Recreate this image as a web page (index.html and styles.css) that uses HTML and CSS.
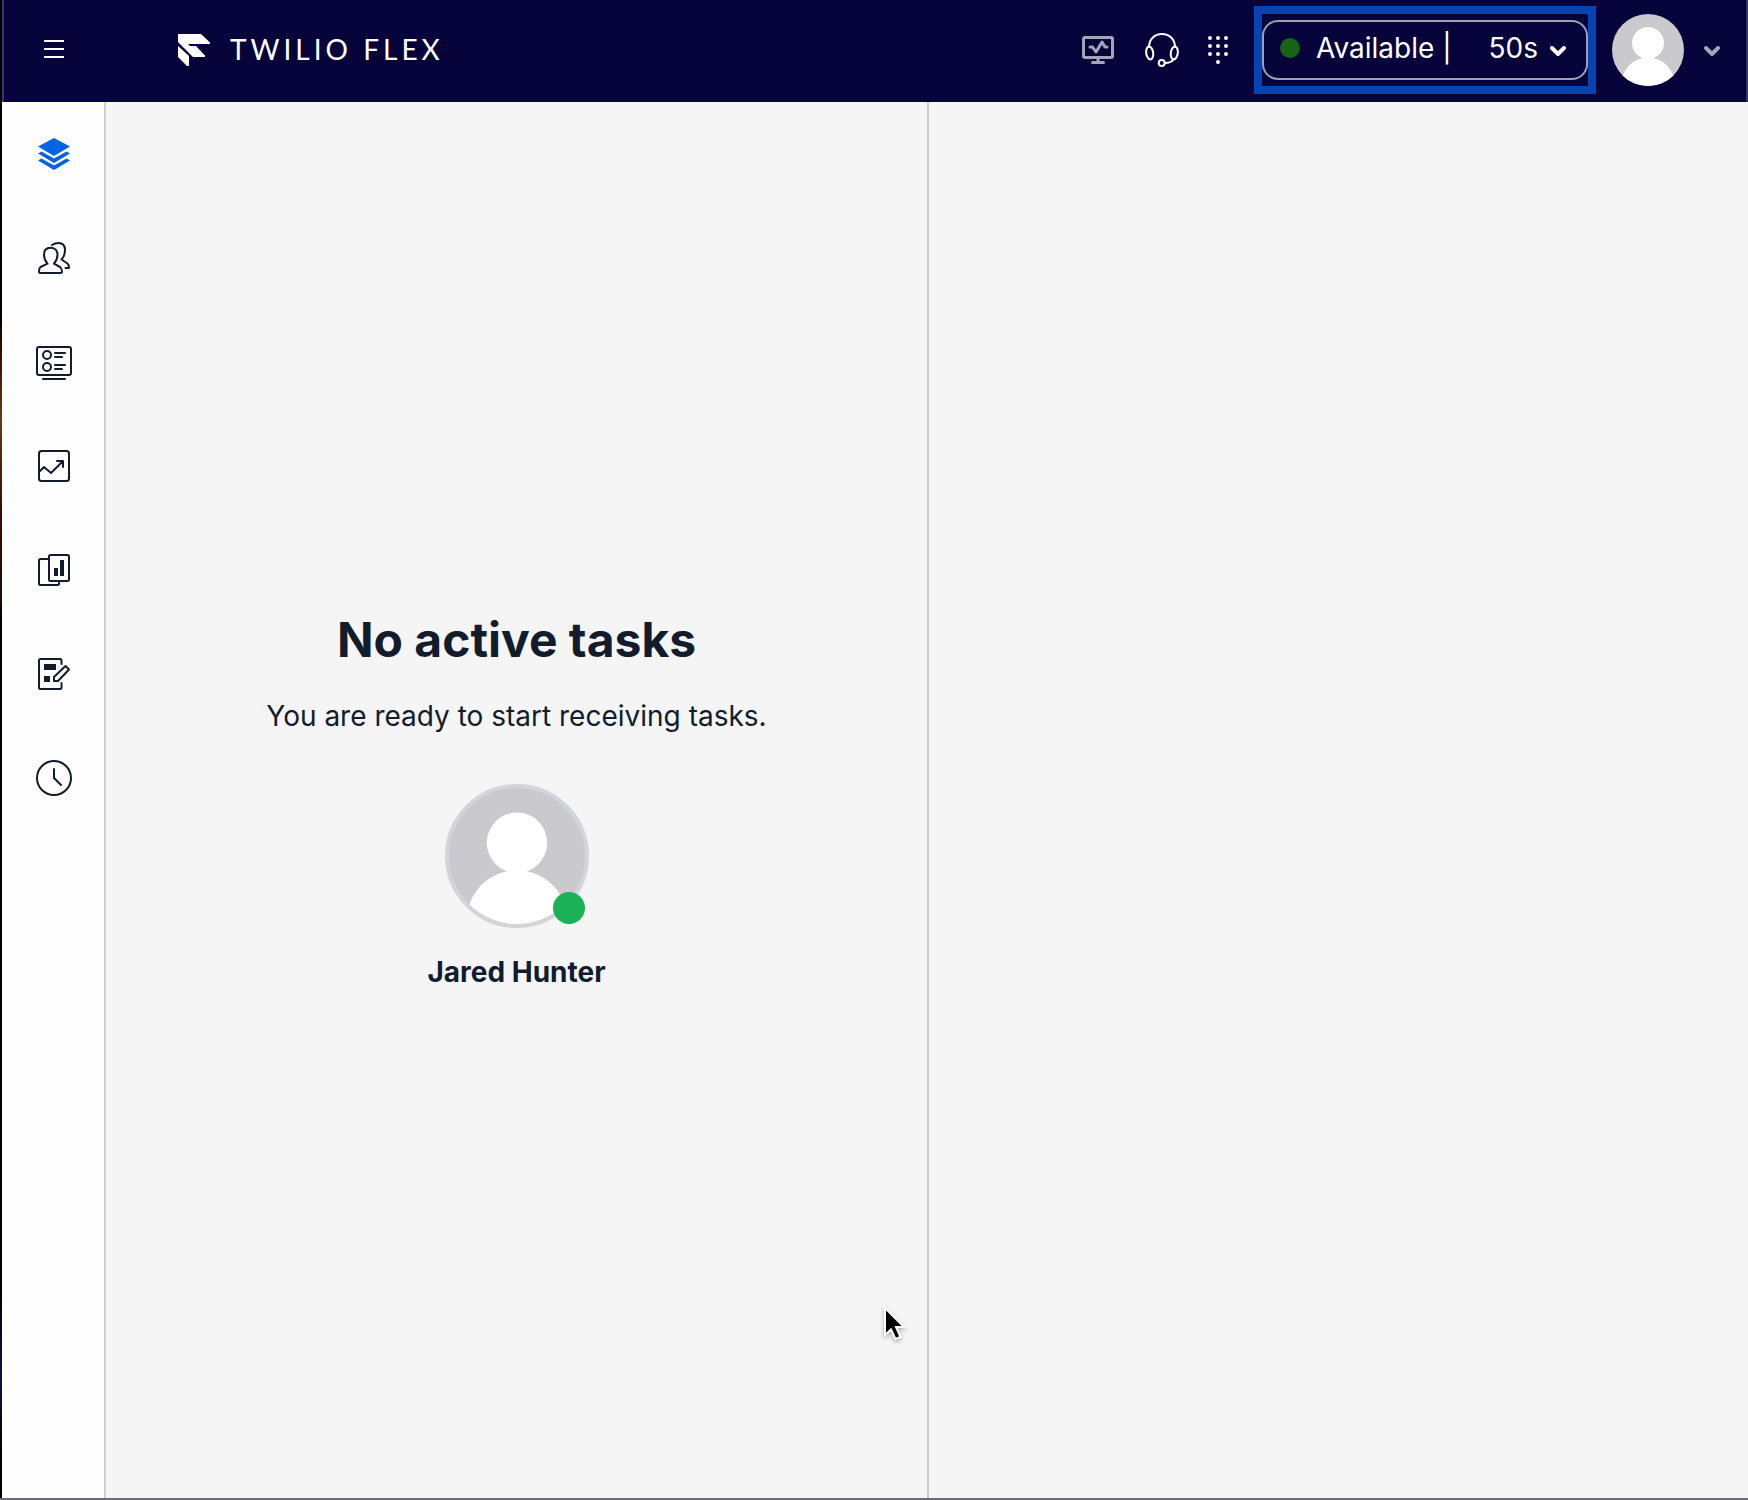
FILE: index.html
```html
<!DOCTYPE html>
<html lang="en">
<head>
<meta charset="utf-8">
<meta name="viewport" content="width=device-width, initial-scale=1">
<title>Twilio Flex</title>
<link rel="stylesheet" href="styles.css">
</head>
<body>
<svg class="defs" aria-hidden="true">
  <symbol id="person" viewBox="0 0 72 72">
    <circle cx="36" cy="29" r="16"/>
    <circle cx="36" cy="70" r="26.500"/>
  </symbol>
  <symbol id="chevron" viewBox="0 0 16 12">
    <path d="M2 3l6 6 6-6" fill="none" stroke="currentColor" stroke-width="4" stroke-linecap="round" stroke-linejoin="round"/>
  </symbol>
</svg>
<div class="window">
  <header class="topbar">
    <button class="menu" type="button" aria-label="Menu">
      <svg width="20" height="18" viewBox="0 0 20 18"><path d="M0 1h20M0 9h20M0 17h20" stroke="currentColor" stroke-width="2"/></svg>
    </button>
    <a class="brand" href="#">
      <svg width="32" height="32" viewBox="0 0 32 32" fill="currentColor">
        <path d="M0 0h23l9 8.500V10H10l2 2h6l9 9.500V23H15L0 8z"/>
        <path d="M0 12l11 10v10H9L0 23z"/>
      </svg>
      <span class="wordmark">TWILIO FLEX</span>
    </a>
    <div class="tools">
      <button class="tool dim" type="button" aria-label="Monitor">
        <svg width="36" height="36" viewBox="0 0 36 36" fill="none" stroke="currentColor" stroke-width="3" stroke-linejoin="round" stroke-linecap="round"><rect x="3.500" y="5.500" width="29" height="20" rx="1.500"/><path d="M10 15h2.500l3.500 5 6-10 3 5h2M18 26v4M12.500 30.500h11"/></svg>
      </button>
      <button class="tool" type="button" aria-label="Audio devices">
        <svg width="36" height="36" viewBox="0 0 36 36" fill="none" stroke="currentColor" stroke-width="2" stroke-linecap="round"><path d="M5 15C5 7 11 2 18 2s13 5 13 13M21 31c4 0 7-1 9-4"/><ellipse cx="5.700" cy="21" rx="3.500" ry="6.500" transform="rotate(-8 5.700 21)"/><ellipse cx="30.300" cy="21" rx="3.500" ry="6.500" transform="rotate(8 30.300 21)"/><circle cx="17.700" cy="31" r="3"/></svg>
      </button>
      <button class="tool" type="button" aria-label="Dialpad">
        <svg width="20" height="28" viewBox="0 0 20 28" fill="currentColor"><circle cx="2" cy="2" r="2"/><circle cx="10" cy="2" r="2"/><circle cx="18" cy="2" r="2"/><circle cx="2" cy="10" r="2"/><circle cx="10" cy="10" r="2"/><circle cx="18" cy="10" r="2"/><circle cx="2" cy="18" r="2"/><circle cx="10" cy="18" r="2"/><circle cx="18" cy="18" r="2"/><circle cx="10" cy="26" r="2"/></svg>
      </button>
    </div>
    <div class="highlight">
      <button class="status" type="button">
        <span class="status-dot"></span>
        <span>Available |</span>
        <span class="timer">50s</span>
        <svg class="chevron" width="16" height="12"><use href="#chevron"/></svg>
      </button>
    </div>
    <button class="account" type="button" aria-label="Account">
      <svg class="avatar small" viewBox="0 0 72 72"><use href="#person"/></svg>
      <svg class="chevron dim" width="16" height="12"><use href="#chevron"/></svg>
    </button>
  </header>
  <div class="workspace">
    <nav class="sidebar" aria-label="Main">
      <a class="nav-item active" href="#" aria-label="Agent desktop">
        <svg class="icon" viewBox="0 0 36 36"><g fill="currentColor" stroke="none"><path d="M18 2l16 8.500L18 20 2 10.500z"/><path d="M2 17.500L5.500 15.500 18 22.500 30.500 15.500 34 17.500 18 27z"/><path d="M2 24.500L5.500 22.500 18 29.500 30.500 22.500 34 24.500 18 34z"/></g></svg>
      </a>
      <a class="nav-item" href="#" aria-label="Teams">
        <svg class="icon" viewBox="0 0 36 36"><path d="M14.500 7.700c-4.500 0-6.500 3-6.500 7 0 4 1 6 3.500 9L4.500 27c-1.500 1-1.500 2.500-1.500 4.500q0 1.500 1.500 1.500h20q1.500 0 1.500-1.500c0-2-.5-3.500-2-4.500l-6-3.300c2.500-3 3.500-5 3.500-9 0-4-2.500-7-7-7zM16 5c2-1.300 4-2 6.500-2 5 0 6.500 3 6.500 7 0 4-1 7-3.500 9.500l6 4c1.200 1 1.500 2 1.500 4.500h-3.500"/></svg>
      </a>
      <a class="nav-item" href="#" aria-label="Queue statistics">
        <svg class="icon" viewBox="0 0 36 36"><rect x="1" y="3" width="34" height="28" rx="2"/><circle cx="11" cy="11" r="4"/><circle cx="11" cy="23" r="4"/><path d="M19 9h10M19 13h7M19 21h10M19 25h7M7 35h22"/></svg>
      </a>
      <a class="nav-item" href="#" aria-label="Insights">
        <svg class="icon" viewBox="0 0 36 36"><rect x="3" y="3" width="30" height="30" rx="2.500"/><path d="M4 23l4-4 7 6 12-12M21 13h6v6"/></svg>
      </a>
      <a class="nav-item" href="#" aria-label="Dashboards">
        <svg class="icon" viewBox="0 0 36 36"><rect x="13" y="3" width="20" height="26" rx="1.500"/><path d="M13 7H4.500Q3 7 3 8.500v23Q3 33 4.500 33h17q1.500 0 1.500-1.500V29"/><path d="M18 16h4v8h-4zM24 8h4v16h-4z" fill="currentColor" stroke="none"/></svg>
      </a>
      <a class="nav-item" href="#" aria-label="Questionnaires">
        <svg class="icon" viewBox="0 0 36 36"><path d="M25.500 8V4.500Q25.500 3 24 3H4.500Q3 3 3 4.500v27Q3 33 4.500 33H24q1.500 0 1.500-1.500V27"/><path d="M18 25v-4L29.500 10l3.500 3.500L22 25z"/><path d="M8 8h12v6H8zM8 20h6v6H8z" fill="currentColor" stroke="none"/></svg>
      </a>
      <a class="nav-item" href="#" aria-label="Historical">
        <svg class="icon" viewBox="0 0 36 36"><circle cx="18" cy="18" r="17"/><path d="M18 9v9l7 7"/></svg>
      </a>
    </nav>
    <main class="panels">
      <section class="tasks">
        <h1>No active tasks</h1>
        <p class="hint">You are ready to start receiving tasks.</p>
        <div class="profile">
          <svg class="avatar large" viewBox="0 0 72 72"><use href="#person"/></svg>
          <span class="presence"></span>
        </div>
        <p class="name">Jared Hunter</p>
      </section>
      <section class="canvas"></section>
    </main>
  </div>
  <svg class="cursor" width="28" height="40" viewBox="0 0 28 40"><path d="M3 2v27l6-5.500 4.500 9.500 5-2-4.500-10h8z" fill="#000" stroke="#fff" stroke-width="2"/></svg>
</div>
</body>
</html>
```
FILE: styles.css
```css
* {
  box-sizing: border-box;
}

body {
  margin: 0;
  font-family: Inter, "Liberation Sans", sans-serif;
  font-size: 28px;
  line-height: 40px;
  color: #121c2d;
}

button {
  display: flex;
  align-items: center;
  padding: 0;
  border: 0;
  background: none;
  color: inherit;
  font: inherit;
  cursor: pointer;
}

h1,
p {
  margin: 0;
}

svg {
  display: block;
  flex: none;
}

.defs {
  position: absolute;
  width: 0;
  height: 0;
}

.window {
  position: relative;
  display: flex;
  flex-direction: column;
  min-height: 100vh;
  padding-left: 2px;
  border-bottom: 2px solid #6e6b76;
  background: linear-gradient(#000 0 21%, #3a1408 24%, #6b3a10 28%, #3a0a08 34%, #1c0c08 40%, #000 41% 68%, #000 86%, #10123c 92%, #000 97%);
}

.topbar {
  display: flex;
  align-items: center;
  height: 102px;
  padding: 0 28px 2px 0;
  background: #06033a;
  box-shadow: inset 2px 0 #37346a, inset -2px 0 #37346a;
  color: #fff;
}

.menu {
  justify-content: center;
  width: 104px;
  height: 100px;
  padding-bottom: 2px;
}

.brand {
  display: flex;
  align-items: center;
  gap: 20px;
  margin-left: 72px;
  color: inherit;
  text-decoration: none;
}

.wordmark {
  padding-bottom: 2px;
  font-family: Lato, sans-serif;
  font-weight: 400;
  letter-spacing: 4px;
}

.tools {
  display: flex;
  align-items: center;
  gap: 28px;
  margin-left: auto;
}

.dim {
  color: #a5a4b8;
}

.highlight {
  margin-left: 26px;
  padding: 6px 0;
  border: 8px solid #0645b1;
}

.status {
  width: 326px;
  height: 60px;
  padding: 0 20px 4px 16px;
  border: 2px solid #a09fb2;
  border-radius: 16px;
}

.status-dot {
  width: 20px;
  height: 20px;
  margin-right: 16px;
  border-radius: 50%;
  background: #186416;
}

.timer {
  margin-left: auto;
  margin-right: 12px;
}

.status .chevron {
  margin-top: 6px;
}

.account {
  gap: 20px;
  margin-left: 16px;
}

.account .chevron {
  margin-top: 2px;
}

.avatar {
  border-radius: 50%;
  background: #c9c9ce;
  fill: #fff;
}

.avatar.small {
  width: 72px;
  height: 72px;
}

.avatar.large {
  width: 144px;
  height: 144px;
  border: 4px solid #d4d4dc;
}

.workspace {
  display: flex;
  flex: 1;
}

.sidebar {
  flex: none;
  width: 104px;
  background: #fefefe;
  box-shadow: inset -2px 0 #d0d0d5;
}

.nav-item {
  display: flex;
  align-items: center;
  justify-content: center;
  height: 104px;
  color: #121c2d;
}

.nav-item.active {
  color: #0263e0;
}

.icon {
  width: 36px;
  height: 36px;
  fill: none;
  stroke: currentColor;
  stroke-width: 2;
  stroke-linecap: round;
  stroke-linejoin: round;
}

.panels {
  display: grid;
  flex: 1;
  grid-template-columns: 1fr 1fr;
  background: #f5f5f5;
}

.tasks {
  display: flex;
  flex-direction: column;
  align-items: center;
  justify-content: center;
  text-align: center;
}

.canvas {
  border-left: 2px solid #cbcbd0;
}

h1 {
  font-size: 48px;
  font-weight: 700;
  line-height: 64px;
}

.hint {
  margin-top: 24px;
}

.profile {
  position: relative;
  margin: 48px 0 24px;
}

.presence {
  position: absolute;
  right: 4px;
  bottom: 4px;
  width: 32px;
  height: 32px;
  border-radius: 50%;
  background: #1bb157;
}

.name {
  font-weight: 700;
}

.cursor {
  position: absolute;
  left: 882px;
  top: 1306px;
  filter: drop-shadow(0 2px 2px rgba(0, 0, 0, 0.3));
}
```
